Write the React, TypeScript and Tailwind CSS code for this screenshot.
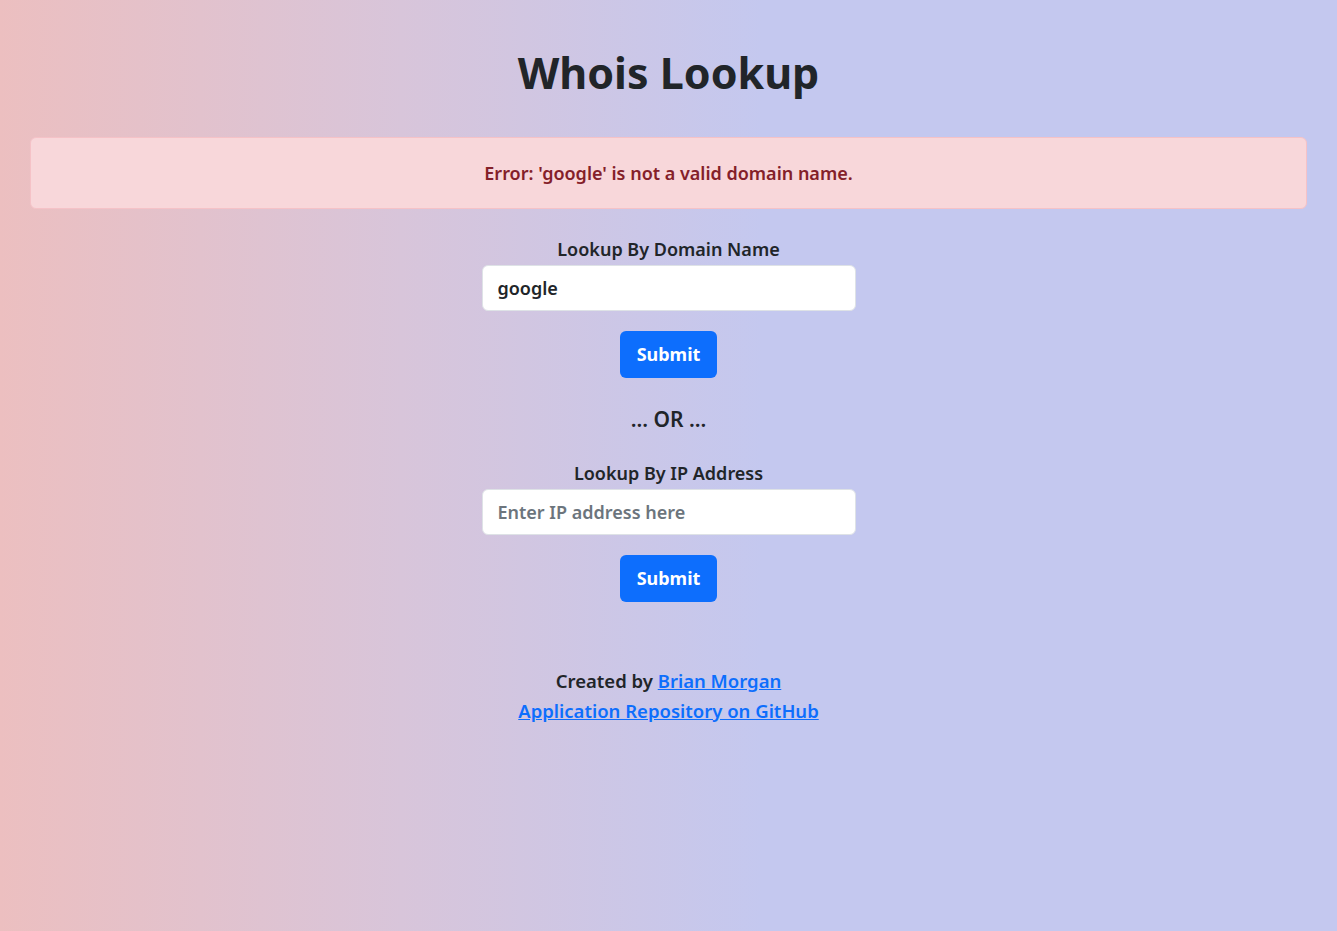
import React from "react";

const font = { fontFamily: '"Noto Sans", "Open Sans", sans-serif' };

function LookupForm({ label, value, placeholder }: { label: string; value?: string; placeholder: string }) {
  return (
    <div className="flex flex-col items-center">
      <label className="text-[18px] font-semibold leading-[22px] text-[#212529]">{label}</label>
      <input
        type="text"
        defaultValue={value}
        placeholder={placeholder}
        className="mt-[5px] h-[46px] w-[374px] rounded-[6px] border border-[#dee2e6] bg-white px-[15px] text-[18px] font-semibold text-[#212529] placeholder-[#6c757d] outline-none"
      />
      <button className="mt-[20px] h-[47px] w-[97px] rounded-[6px] bg-[#0d6efd] text-[18px] font-bold text-white">
        Submit
      </button>
    </div>
  );
}

export default function App() {
  return (
    <div
      style={font}
      className="min-h-[931px] w-full bg-[linear-gradient(to_right,#ecbfc0_0%,#d8c5da_30%,#c4c8ef_57%,#c4c8ef_100%)] px-[30px] pt-[46px] text-center text-[#212529]"
    >
      <h1 className="text-[43px] font-bold leading-[54px]">Whois Lookup</h1>
      <div className="mt-[37px] flex h-[72px] items-center justify-center rounded-[6px] border border-[#f5c2c7] bg-[#f8d7da] text-[18px] font-semibold text-[#842029]">
        Error: 'google' is not a valid domain name.
      </div>
      <div className="mt-[29px]">
        <LookupForm label="Lookup By Domain Name" value="google" placeholder="Enter domain name here" />
      </div>
      <div className="mt-[28px] text-[21px] font-semibold leading-[26px]">... OR ...</div>
      <div className="mt-[30px]">
        <LookupForm label="Lookup By IP Address" placeholder="Enter IP address here" />
      </div>
      <div className="mt-[64px] flex flex-col items-center text-[18.5px] font-semibold leading-[30px]">
        <p>
          Created by{" "}
          <a href="#" className="text-[#0d6efd] underline">
            Brian Morgan
          </a>
        </p>
        <a href="#" className="text-[#0d6efd] underline">
          Application Repository on GitHub
        </a>
      </div>
    </div>
  );
}
